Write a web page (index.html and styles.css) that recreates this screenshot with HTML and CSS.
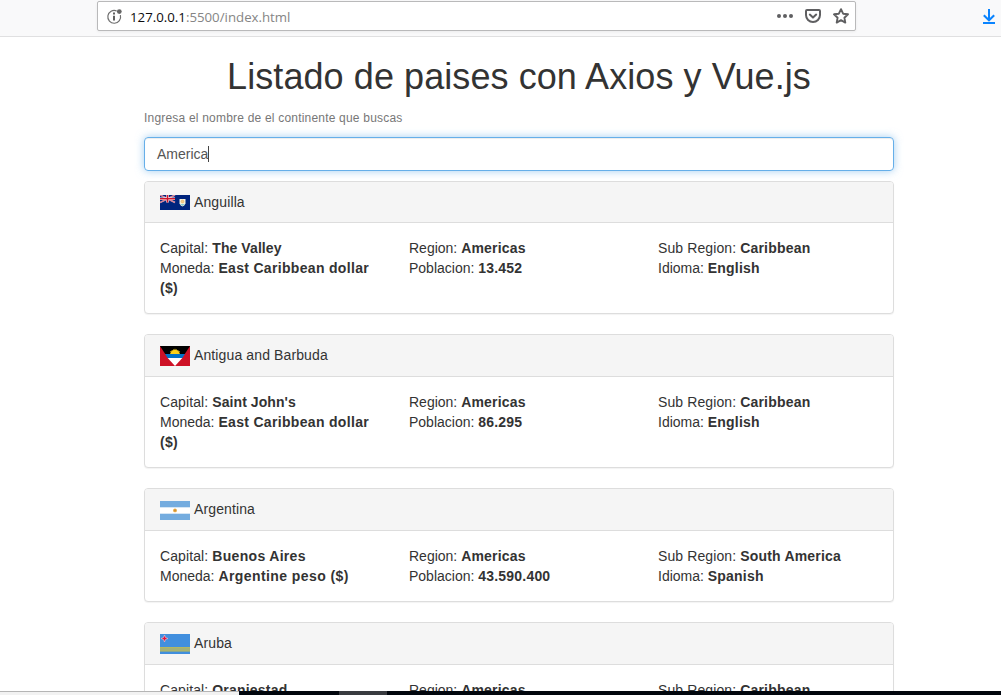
FILE: index.html
```html
<!DOCTYPE html>
<html lang="es">
<head>
<meta charset="utf-8">
<title>Listado de paises</title>
<link rel="stylesheet" href="styles.css">
</head>
<body>
<header class="toolbar">
  <div class="urlbar">
    <svg class="icon-info" width="18" height="18" viewBox="0 0 18 18"><path d="M10.6 2.9A6.4 6.4 0 1 0 14.4 7.2" fill="none" stroke="#6f6f6f" stroke-width="1.2"/><circle cx="13.3" cy="3.6" r="2.4" fill="#666"/><path d="M7 7.7h2v4.8H7zM7 4.5h2v2H7z" fill="#606060"/></svg>
    <span class="url"><b class="host">127.0.0.1</b>:5500/index.html</span>
    <span class="actions">
      <svg width="16" height="16" viewBox="0 0 16 16" fill="#5f5f61"><circle cx="2" cy="8" r="2"/><circle cx="8" cy="8" r="2"/><circle cx="14" cy="8" r="2"/></svg>
      <svg width="16" height="16" viewBox="0 0 16 16" fill="none" stroke="#5f5f61" stroke-width="2" stroke-linecap="round" stroke-linejoin="round"><path d="M2 2h12a1 1 0 0 1 1 1v4a7 7 0 0 1-14 0V3a1 1 0 0 1 1-1z"/><path d="M4.8 6.6L8 9.6l3.2-3"/></svg>
      <svg width="16" height="16" viewBox="0 0 16 16" fill="none" stroke="#5f5f61" stroke-width="1.9" stroke-linejoin="round"><path d="M8 1.2l2.1 4.5 4.9.6-3.6 3.4.9 4.9L8 12.2l-4.3 2.4.9-4.9L1 6.3l4.9-.6z"/></svg>
    </span>
  </div>
  <svg class="icon-download" width="14" height="18" viewBox="0 0 14 18" fill="none" stroke="#0a84ff" stroke-width="2"><path d="M7 1v11M1.8 7.2L7 12.3l5.2-5.1M1 15h12"/></svg>
</header>

<main class="viewport">
  <div class="container">
    <h1 class="title">Listado de paises con Axios y Vue.js</h1>
    <div class="hint">Ingresa el nombre de el continente que buscas</div>
    <div class="form-control"><span class="value">America</span><span class="caret"></span></div>

    <section class="panel">
      <div class="panel-heading">
        <svg class="flag flag-ai" width="30" height="15" viewBox="0 0 30 15"><path fill="#00247d" d="M0 0h30v15H0z"/><path d="M0 0l15 7.5M15 0L0 7.5" stroke="#e8c9d5" stroke-width="1.5"/><path d="M0 0l15 7.5M15 0L0 7.5" stroke="#cf142b" stroke-width=".5"/><path d="M7.5 0v7.5M0 3.75h15" stroke="#fff" stroke-width="2.5"/><path d="M7.5 0v7.5M0 3.75h15" stroke="#cf142b" stroke-width="1.5"/><path fill="#f4f1dc" d="M19.5 4h6v4.5q-1 2.3-3 3-2-.7-3-3z"/><path fill="#83c9d2" d="M20.2 9h4.6l-2.3 2z"/><circle cx="22.5" cy="6.5" r="1.4" fill="#f3cf8c" stroke="#e9b368" stroke-width=".7"/></svg>
        <span class="country">Anguilla</span>
      </div>
      <div class="panel-body">
        <div class="col"><span class="label">Capital: </span><b class="tight">The Valley</b><br>Moneda: <b class="loose">East Caribbean dollar ($)</b></div>
        <div class="col">Region: <b>Americas</b><br>Poblacion: <b>13.452</b></div>
        <div class="col"><span class="label">Sub Region: </span><b>Caribbean</b><br>Idioma: <b>English</b></div>
      </div>
    </section>

    <section class="panel">
      <div class="panel-heading">
        <svg class="flag flag-ag" width="30" height="20" viewBox="0 0 30 20"><path fill="#ce1126" d="M0 0h30v20H0z"/><path fill="#000" d="M0 0h30l-5.2 8H5.2z"/><path fill="#fcd116" d="M10 8l.8-1.4-1-1.2 1.8-.1.1-1.3 1.3.5.7-1.4.8.8.5-1.7.5 1.7.8-.8.7 1.4 1.3-.5.1 1.3 1.8.1-1 1.2.8 1.4z"/><path fill="#0072c6" d="M5 8h20l-2.7 4H7.7z"/><path fill="#fff" d="M7.7 12h14.6L15 20z"/></svg>
        <span class="country">Antigua and Barbuda</span>
      </div>
      <div class="panel-body">
        <div class="col"><span class="label">Capital: </span><b class="tight">Saint John's</b><br>Moneda: <b class="loose">East Caribbean dollar ($)</b></div>
        <div class="col">Region: <b>Americas</b><br>Poblacion: <b>86.295</b></div>
        <div class="col"><span class="label">Sub Region: </span><b>Caribbean</b><br>Idioma: <b>English</b></div>
      </div>
    </section>

    <section class="panel">
      <div class="panel-heading">
        <svg class="flag flag-ar" width="30" height="19" viewBox="0 0 30 19"><path fill="#74acdf" d="M0 0h30v19H0z"/><path fill="#fff" d="M0 6.3h30v6.4H0z"/><circle cx="15" cy="9.4" r="1.9" fill="#e8aa45"/><circle cx="15" cy="9.4" r=".8" fill="#c98a30"/></svg>
        <span class="country">Argentina</span>
      </div>
      <div class="panel-body">
        <div class="col"><span class="label">Capital: </span><b class="loose">Buenos Aires</b><br>Moneda: <b class="looser">Argentine peso ($)</b></div>
        <div class="col">Region: <b>Americas</b><br>Poblacion: <b>43.590.400</b></div>
        <div class="col"><span class="label">Sub Region: </span><b>South America</b><br>Idioma: <b>Spanish</b></div>
      </div>
    </section>

    <section class="panel">
      <div class="panel-heading">
        <svg class="flag flag-aw" width="30" height="20" viewBox="0 0 30 20"><path fill="#418fde" d="M0 0h30v20H0z"/><path fill="#a3b178" d="M0 13h30v4H0z"/><path fill="#c5c04c" d="M0 13h30v.6H0zM0 16.8h30v.7H0z"/><path fill="#e1143c" stroke="#f1c6d7" stroke-width=".6" d="M4.5 1l1 2.5L8 4.5l-2.5 1-1 2.5-1-2.5L1 4.5l2.5-1z"/></svg>
        <span class="country">Aruba</span>
      </div>
      <div class="panel-body">
        <div class="col"><span class="label">Capital: </span><b>Oranjestad</b></div>
        <div class="col">Region: <b>Americas</b></div>
        <div class="col"><span class="label">Sub Region: </span><b>Caribbean</b></div>
      </div>
    </section>
  </div>
</main>

<footer class="bottom-edge">
  <div class="status"></div>
  <div class="taskbar"><div class="task-active"></div></div>
</footer>
</body>
</html>
```

FILE: styles.css
```css
* { box-sizing: border-box; }

body {
  margin: 0;
  height: 695px;
  display: flex;
  flex-direction: column;
  overflow: hidden;
  background: #fff;
  color: #333;
  font: 14px/20px "Liberation Sans", Arial, sans-serif;
}

svg { display: block; flex: none; }

.toolbar {
  flex: none;
  height: 37px;
  display: flex;
  align-items: flex-start;
  justify-content: space-between;
  padding: 1px 5px 0 97px;
  background: #f9f9fa;
  border-bottom: 1px solid #e0e0e1;
}

.urlbar {
  width: 759px;
  height: 30px;
  display: flex;
  align-items: center;
  padding: 0 6px 0 8px;
  background: #fff;
  border: 1px solid #b9b9ba;
  border-radius: 2px;
  box-shadow: 0 1px 3px rgba(0, 0, 0, .06);
}

.icon-info { margin-top: 1px; }

.url {
  flex: 1;
  margin-left: 6px;
  padding-top: 1px;
  color: #858585;
  font: 13.25px/18px "Open Sans", "Noto Sans", sans-serif;
}

.host { color: #0c0c0d; font-weight: normal; }

.actions { display: flex; gap: 12px; }

.icon-download { margin-top: 7px; }

.viewport {
  flex: 1;
  min-height: 0;
  overflow: hidden;
}

.container { width: 750px; margin-left: 144px; }

.title {
  margin: 20px 0 0;
  font-size: 36px;
  font-weight: normal;
  line-height: 40px;
  letter-spacing: .08px;
  text-align: center;
}

.hint {
  margin-top: 11px;
  color: #777;
  font-size: 12px;
  letter-spacing: .2px;
}

.form-control {
  height: 34px;
  display: flex;
  align-items: center;
  margin: 9px 0 10px;
  padding: 0 12px;
  color: #555;
  border: 1px solid #66afe9;
  border-radius: 4px;
  box-shadow: inset 0 1px 1px rgba(0, 0, 0, .075), 0 0 8px rgba(102, 175, 233, .6);
}

.caret { width: 1px; height: 16px; background: #444; }

.panel {
  margin-bottom: 20px;
  background: #fff;
  border: 1px solid #ddd;
  border-radius: 4px;
  box-shadow: 0 1px 1px rgba(0, 0, 0, .05);
}

.panel-heading {
  display: flex;
  align-items: flex-start;
  gap: 4px;
  padding: 10px 15px;
  background: #f5f5f5;
  border-bottom: 1px solid #ddd;
  border-radius: 3px 3px 0 0;
}

.country { letter-spacing: .12px; }

.flag-ai { margin-top: 3px; }
.flag-ag { margin-top: 1px; }
.flag-ar { margin-top: 2px; }
.flag-aw { margin-top: 1px; }

.panel-body {
  display: grid;
  grid-template-columns: 249px 249px 1fr;
  padding: 15px 0;
}

.col { padding: 0 15px; }
.col b { letter-spacing: .2px; }
.col .label { letter-spacing: .1px; }
.col .tight { letter-spacing: .08px; }
.col .loose { letter-spacing: .32px; }
.col .looser { letter-spacing: .42px; }

.bottom-edge { flex: none; height: 4px; display: flex; }

.status {
  width: 239px;
  background: #f2f2f2;
  border-top: 1px solid #b5b5b5;
}

.taskbar { flex: 1; padding-left: 100px; background: #01060d; }
.task-active { width: 48px; height: 4px; background: #393b40; }
```
